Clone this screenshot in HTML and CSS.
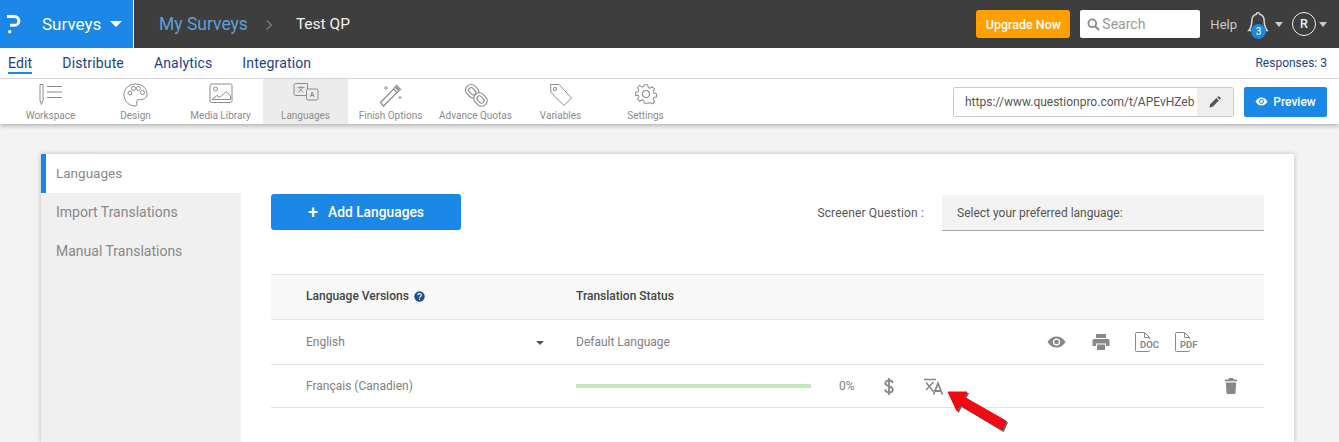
FILE: index.html
```html
<!DOCTYPE html>
<html lang="en">
<head>
<meta charset="UTF-8" />
<title>Test QP - Languages</title>
<link rel="stylesheet" href="styles.css">
</head>
<body>

<!-- Top bar -->
<div class="topbar">
  <div class="brand">
    <svg class="logo" width="14" height="19" viewBox="0 0 14 19"><path d="M0 1.500h7.500a4.200 4.200 0 0 1 0 8.800H3" fill="none" stroke="#fff" stroke-width="3"/><rect x="1" y="15" width="3.400" height="3.400" rx="1.700" fill="#fff"/></svg>
    <span class="brand-name">Surveys</span>
    <span class="caret caret-brand"></span>
  </div>
  <div class="crumbs">
    <span class="crumb-link">My Surveys</span>
    <svg class="crumb-sep" width="8" height="12" viewBox="0 0 8 12"><path d="M1.500 1.500L6.500 6l-5 4.500" fill="none" stroke="#808080" stroke-width="1.200"/></svg>
    <span class="crumb-current">Test QP</span>
  </div>
  <div class="top-right">
    <button class="upgrade">Upgrade Now</button>
    <div class="search">
      <svg width="13" height="13" viewBox="0 0 13 13"><circle cx="5.300" cy="5.300" r="3.900" fill="none" stroke="#8a8a8a" stroke-width="1.800"/><path d="M8.200 8.200l3.800 3.800" stroke="#8a8a8a" stroke-width="2"/></svg>
      <span>Search</span>
    </div>
    <span class="help">Help</span>
    <div class="bell">
      <svg width="22" height="27" viewBox="0 0 22 27"><path d="M11 1.500c1 0 1.600.6 1.600 1.700 3.300.8 4.600 3.500 4.600 6.800 0 4.500 1 7 3 9.500H1.800c2-2.500 3-5 3-9.500 0-3.300 1.300-6 4.600-6.800 0-1.100.6-1.700 1.600-1.700z" fill="none" stroke="#cfd3d8" stroke-width="1.600"/></svg>
      <span class="badge">3</span>
    </div>
    <span class="caret caret-small"></span>
    <span class="avatar">R</span>
    <span class="caret caret-small caret-last"></span>
  </div>
</div>

<!-- Tabs -->
<div class="tabs">
  <a class="tab active">Edit</a>
  <a class="tab">Distribute</a>
  <a class="tab">Analytics</a>
  <a class="tab">Integration</a>
  <span class="responses">Responses: 3</span>
</div>

<!-- Toolbar -->
<div class="toolbar">
  <div class="tool">
    <svg width="26" height="24" viewBox="0 0 26 24" fill="none" stroke="#8c8c8c"><path d="M2 1.500h3v16l-1.500 4-1.500-4z"/><path d="M9 3.500h15M9 9h15M9 14.500h15" stroke-width="1.200"/></svg>
    <span>Workspace</span>
  </div>
  <div class="tool">
    <svg width="25" height="24" viewBox="0 0 25 24" fill="none" stroke="#8c8c8c"><path d="M12.500 1C6 1 1 5.800 1 11.800 1 18 6 23 12 23c2.200 0 2.500-1.500 1.800-3-.8-1.800.3-3.500 2.400-3.400 3.800.2 7.800-1 7.800-5.400C24 5.300 19 1 12.500 1z"/><circle cx="7" cy="10" r="2"/><circle cx="10.500" cy="5.500" r="2"/><circle cx="15.500" cy="5.500" r="2"/><circle cx="19.500" cy="9.500" r="2"/></svg>
    <span>Design</span>
  </div>
  <div class="tool">
    <svg width="24" height="21" viewBox="0 0 24 21" fill="none" stroke="#8c8c8c"><rect x="1" y="1" width="22" height="18.500" rx="1.500"/><circle cx="6.500" cy="6" r="2"/><path d="M3 16.500l5-4 3 2 6-6 4.500 4v4z"/></svg>
    <span>Media Library</span>
  </div>
  <div class="tool tool-active">
    <svg width="26" height="18" viewBox="0 0 26 18" fill="none" stroke="#8c8c8c"><path d="M14 12.500H3a2 2 0 0 1-2-2V2a1.500 1.500 0 0 1 1.500-1.500h12V6"/><rect x="13.500" y="6" width="11.500" height="11" rx="1.500"/><path d="M4.500 4.500h7M8 3v1.500M5.500 9.500l4.500-5M6 5.500l4.500 4" stroke-width=".9"/><path d="M17.300 14l1.900-5 1.900 5M18 12.500h2.400" stroke-width="1"/></svg>
    <span>Languages</span>
  </div>
  <div class="tool">
    <svg width="24" height="24" viewBox="0 0 24 24" fill="none" stroke="#8c8c8c" stroke-width="1.200"><path d="M1.500 19.500L14.500 6l3.500 3.500L4.500 23z"/><path d="M14.500 6l3-3.500 4 4-3.500 3"/><path d="M17 4.500l2.500 2.500" stroke-width="1.800"/><path d="M7 3v4M5 5h4M21 13v3M19.500 14.500h3" stroke-width=".9"/></svg>
    <span>Finish Options</span>
  </div>
  <div class="tool">
    <svg width="24" height="24" viewBox="0 0 24 24" fill="none" stroke="#8c8c8c" stroke-width="1.100">
      <g transform="rotate(-45 7.500 7.500)"><rect x="2" y="1.500" width="11" height="14" rx="5"/><rect x="5" y="4.500" width="5" height="8" rx="2.500"/></g>
      <g transform="rotate(-45 16.500 16.500)"><rect x="11" y="9.500" width="11" height="14" rx="5" fill="#fff"/><rect x="14" y="12.500" width="5" height="8" rx="2.500"/></g>
    </svg>
    <span>Advance Quotas</span>
  </div>
  <div class="tool">
    <svg width="24" height="24" viewBox="0 0 24 24" fill="none" stroke="#8c8c8c"><path d="M1.500 1.500h8.500l12.500 13.500-7.500 7.500L2 9.500z" stroke-linejoin="round"/><circle cx="6" cy="6" r="1.600"/></svg>
    <span>Variables</span>
  </div>
  <div class="tool">
    <svg width="22" height="22" viewBox="0 0 24 24" fill="none" stroke="#8c8c8c" stroke-width="1.200" stroke-linejoin="round"><circle cx="12" cy="12" r="3.800"/><path d="M10 1h4l.7 3.200 2 .9 2.800-1.800 2.800 2.800-1.800 2.800.9 2 3.100.7v4l-3.100.7-.9 2 1.800 2.800-2.800 2.800-2.800-1.800-2 .9L14 23h-4l-.7-3.200-2-.9-2.800 1.800-2.800-2.800 1.800-2.800-.9-2L-.5 14v-4l3.100-.7.900-2-1.800-2.800 2.800-2.800 2.800 1.800 2-.9z" transform="translate(1.100 1.100) scale(.91)"/></svg>
    <span>Settings</span>
  </div>
  <div class="toolbar-right">
    <div class="url-box">
      <span class="url-text">https://www.questionpro.com/t/APEvHZeb</span>
      <span class="url-edit">
        <svg width="12" height="12" viewBox="0 0 12 12"><path d="M0.500 11.500l.7-3.200 6.200-6.200 2.500 2.500-6.200 6.200zM8.200 1.300l.8-.8a.9.900 0 0 1 1.200 0l1.300 1.300a.9.900 0 0 1 0 1.200l-.8.800z" fill="#555"/></svg>
      </span>
    </div>
    <button class="preview">
      <svg width="13" height="9" viewBox="0 0 13 9"><path d="M.500 4.500C2 2 4 .500 6.500.500S11 2 12.500 4.500C11 7 9 8.500 6.500 8.500S2 7 .500 4.500z" fill="#fff"/><circle cx="6.500" cy="4.500" r="2.400" fill="#1b87e6"/><circle cx="6.500" cy="4.500" r="1.400" fill="#fff"/></svg>
      Preview
    </button>
  </div>
</div>

<!-- Page -->
<div class="page">
  <div class="card">
    <div class="side">
      <div class="side-item selected">Languages</div>
      <div class="side-item">Import Translations</div>
      <div class="side-item">Manual Translations</div>
    </div>
    <div class="content">
      <div class="content-top">
        <button class="add-btn"><span class="plus">+</span>Add Languages</button>
        <div class="screener">
          <span class="screener-label">Screener Question :</span>
          <div class="screener-select">Select your preferred language:</div>
        </div>
      </div>

      <div class="lang-table">
        <div class="row row-head">
          <div class="col-name">Language Versions
            <svg class="help-dot" width="11" height="11" viewBox="0 0 11 11"><circle cx="5.500" cy="5.500" r="5.200" fill="#1d4f91"/><path d="M3.800 4.300c0-2.200 3.500-2.200 3.500-.1 0 1.300-1.700 1.200-1.700 2.500" fill="none" stroke="#fff" stroke-width="1.100"/><circle cx="5.600" cy="8.300" r=".7" fill="#fff"/></svg>
          </div>
          <div class="col-status">Translation Status</div>
        </div>
        <div class="row">
          <div class="col-name">English<span class="caret caret-row"></span></div>
          <div class="col-status">Default Language</div>
          <div class="row-icons">
            <svg class="ic-eye" width="19" height="12" viewBox="0 0 19 12"><path d="M.500 6C2.500 2.500 5.500.500 9.500.500S16.500 2.500 18.500 6c-2 3.500-5 5.500-9 5.500S2.500 9.500.500 6z" fill="#888"/><circle cx="9.500" cy="6" r="3.600" fill="#fff"/><circle cx="9.500" cy="6" r="2.300" fill="#888"/></svg>
            <svg class="ic-print" width="18" height="16" viewBox="0 0 17 16"><path d="M3.500 0h10v4h-10zM1.500 5h14A1.500 1.500 0 0 1 17 6.500V12h-3.500V9.500h-10V12H0V6.500A1.500 1.500 0 0 1 1.500 5zM4.500 10.500h8V16h-8z" fill="#888"/></svg>
            <div class="file-ic">
              <svg width="15" height="20" viewBox="0 0 15 20"><path d="M.500 1.500a1 1 0 0 1 1-1h8l5 5v13a1 1 0 0 1-1 1h-12a1 1 0 0 1-1-1z M9.500.500v5h5" fill="#fff" stroke="#8a8a8a"/></svg>
              <span>DOC</span>
            </div>
            <div class="file-ic">
              <svg width="15" height="20" viewBox="0 0 15 20"><path d="M.500 1.500a1 1 0 0 1 1-1h8l5 5v13a1 1 0 0 1-1 1h-12a1 1 0 0 1-1-1z M9.500.500v5h5" fill="#fff" stroke="#8a8a8a"/></svg>
              <span>PDF</span>
            </div>
          </div>
        </div>
        <div class="row row-last">
          <div class="col-name">Français (Canadien)</div>
          <div class="col-status col-progress">
            <div class="bar"></div>
            <span class="pct">0%</span>
            <svg class="ic-dollar" width="10" height="17" viewBox="0 0 10 17" fill="none" stroke="#888" stroke-width="1.800"><path d="M8.800 5C8.500 3 7 2.500 5 2.500 3 2.500 1.300 3.500 1.300 5.200c0 3.800 7.500 2 7.500 6.200 0 2-1.800 3-3.800 3-2.200 0-3.700-1-4-3M5 0v17"/></svg>
            <svg class="ic-translate" width="20" height="17" viewBox="0 0 20 17" fill="none" stroke="#888" stroke-width="1.500"><path d="M0 1.500h12M2 4.500l7.500 9M9.500 4l-7.500 8"/><path d="M9.500 16.500L14 5.500l4.500 11M11 13h6" stroke-width="1.800"/></svg>
          </div>
          <svg class="ic-trash" width="12" height="16" viewBox="0 0 12 16"><path d="M4 0h4l.7 1.500H12v1.800H0V1.500h3.300zM.8 4.500h10.400L10.500 15a1 1 0 0 1-1 1h-7a1 1 0 0 1-1-1z" fill="#888"/></svg>
        </div>
      </div>
    </div>
  </div>
</div>

<!-- Annotation arrow -->
<svg class="arrow" width="66" height="46" viewBox="0 0 66 46">
  <path d="M2 2L21 2 18 7 60 31 56 40 14 15 11 21Z" fill="#333" stroke="#333" stroke-linejoin="round" opacity=".75" transform="translate(1.500 1.500)"/>
  <path d="M2 2L21 2 18 7 60 31 56 40 14 15 11 21Z" fill="#f00a14" stroke="#f00a14" stroke-linejoin="round"/>
</svg>

</body>
</html>
```

FILE: styles.css
```css
/* Base */
html, body {
  height: 442px;
  overflow: hidden;
}
body {
  margin: 0;
  background: #f3f3f3;
  font-family: 'Roboto', 'Noto Sans', sans-serif;
  color: #777;
  position: relative;
}
button {
  font-family: inherit;
  border: none;
  cursor: pointer;
}
.caret {
  display: inline-block;
  width: 0;
  height: 0;
  border-left: 5px solid transparent;
  border-right: 5px solid transparent;
  border-top: 5px solid #ccc;
}

/* Top bar */
.topbar {
  display: flex;
  align-items: center;
  height: 48px;
  background: #3e3e3e;
}
.brand {
  display: flex;
  align-items: center;
  width: 133px;
  height: 48px;
  background: #1b87e6;
  border-right: 1px solid #fff;
  color: #fff;
}
.logo {
  margin-left: 7px;
}
.brand-name {
  margin-left: 21px;
  font-size: 17px;
}
.caret-brand {
  margin-left: 9px;
  border-left-width: 6px;
  border-right-width: 6px;
  border-top: 6px solid #fff;
}
.crumbs {
  display: flex;
  align-items: center;
  margin-left: 25px;
  font-size: 17.5px;
}
.crumb-link {
  color: #5f9fd6;
}
.crumb-sep {
  margin: 2px 23px 0 17px;
}
.crumb-current {
  color: #f2f2f2;
  font-size: 15.500px;
}
.top-right {
  display: flex;
  align-items: center;
  margin-left: auto;
  padding-right: 12px;
}
.upgrade {
  width: 94px;
  height: 28px;
  background: #ff9f00;
  color: #fff;
  font-size: 12.500px;
  font-weight: 500;
  border-radius: 3px;
  padding: 0;
}
.search {
  display: flex;
  align-items: center;
  gap: 2px;
  width: 120px;
  height: 28px;
  margin-left: 10px;
  padding-left: 7px;
  box-sizing: border-box;
  background: #fff;
  border-radius: 2px;
  color: #999;
  font-size: 14px;
}
.help {
  margin-left: 10px;
  color: #ccc;
  font-size: 13px;
}
.bell {
  position: relative;
  width: 22px;
  height: 27px;
  margin-left: 10px;
}
.badge {
  position: absolute;
  left: 4px;
  top: 13px;
  width: 15px;
  height: 15px;
  line-height: 15px;
  border-radius: 50%;
  background: #1b87e6;
  color: #fff;
  font-size: 10px;
  text-align: center;
}
.caret-small {
  margin-left: 6px;
  border-left-width: 4.500px;
  border-right-width: 4.500px;
}
.avatar {
  width: 22px;
  height: 22px;
  line-height: 22px;
  margin-left: 9px;
  border: 1px solid #eee;
  border-radius: 50%;
  text-align: center;
  color: #eee;
  font-size: 12.500px;
  font-weight: 500;
}
.caret-last {
  margin-left: 3px;
}

/* Tabs */
.tabs {
  display: flex;
  align-items: center;
  gap: 30px;
  height: 30px;
  padding: 0 12px 0 8px;
  background: #fff;
  border-bottom: 1px solid #ddd;
}
.tab {
  color: #1d3f87;
  font-size: 14px;
  line-height: 17px;
  letter-spacing: 0.15px;
}
.tab.active {
  border-bottom: 2px solid #1b87e6;
  margin-top: 2px;
}
.responses {
  margin-left: auto;
  color: #1d3f87;
  font-size: 12px;
}

/* Toolbar */
.toolbar {
  display: flex;
  height: 45px;
  padding-left: 8px;
  background: #fff;
  box-shadow: 0 2px 4px rgba(0, 0, 0, 0.25);
  position: relative;
}
.tool {
  display: flex;
  flex-direction: column;
  align-items: center;
  justify-content: space-between;
  width: 85px;
  height: 45px;
  padding: 4px 0 3px;
  box-sizing: border-box;
  font-size: 10px;
  color: #8c8c8c;
}
.tool-active {
  background: #ececec;
}
.toolbar-right {
  display: flex;
  align-items: center;
  gap: 10px;
  margin-left: auto;
  padding-right: 12px;
}
.url-box {
  display: flex;
  align-items: stretch;
  width: 281px;
  height: 30px;
  box-sizing: border-box;
  border: 1px solid #ccc;
  border-radius: 2px;
}
.url-text {
  flex: 1;
  padding-left: 11px;
  overflow: hidden;
  white-space: nowrap;
  font-size: 12px;
  line-height: 28px;
  color: #555;
}
.url-edit {
  display: flex;
  align-items: center;
  justify-content: center;
  width: 36px;
  background: #eee;
}
.preview {
  display: flex;
  align-items: center;
  justify-content: center;
  gap: 5px;
  width: 83px;
  height: 30px;
  padding: 0;
  background: #1b87e6;
  color: #fff;
  font-size: 12px;
  font-weight: 500;
  border-radius: 2px;
}

/* Page + card */
.page {
  padding: 30px 45px 0 41px;
}
.card {
  display: flex;
  height: 288px;
  background: #fff;
  box-shadow: 0 0 5px rgba(0, 0, 0, 0.22);
}
.side {
  width: 200px;
  flex-shrink: 0;
  background: #f0f0f0;
}
.side-item {
  height: 39px;
  line-height: 39px;
  padding-left: 15px;
  font-size: 14px;
  color: #888;
}
.side-item.selected {
  background: #fff;
  border-left: 5px solid #1b87e6;
  padding-left: 10px;
  font-size: 13.500px;
}
.content {
  flex: 1;
  padding: 40px 30px 0;
}

/* Add button + screener */
.content-top {
  display: flex;
  justify-content: space-between;
  height: 80px;
}
.add-btn {
  width: 190px;
  height: 36px;
  padding: 0;
  background: #1b87e6;
  color: #fff;
  font-size: 13.800px;
  font-weight: 500;
  border-radius: 3px;
}
.plus {
  font-size: 18px;
  line-height: 14px;
  margin-right: 10px;
  vertical-align: -1px;
}
.screener {
  display: flex;
  align-items: center;
  height: 36px;
  margin-top: 1px;
}
.screener-label {
  margin-right: 18px;
  color: #555;
  font-size: 12px;
  letter-spacing: 0.15px;
}
.screener-select {
  width: 322px;
  height: 36px;
  line-height: 36px;
  box-sizing: border-box;
  padding-left: 15px;
  background: #f3f3f3;
  border-bottom: 1px solid #aaa;
  color: #555;
  font-size: 12px;
}

/* Language table */
.lang-table {
  border-top: 1px solid #e4e4e4;
}
.row {
  display: flex;
  align-items: center;
  position: relative;
  height: 44px;
  border-bottom: 1px solid #e4e4e4;
  font-size: 12px;
  color: #808080;
}
.row-head {
  box-sizing: border-box;
  height: 45px;
  padding-bottom: 2px;
  background: #f8f8f8;
  color: #444;
  font-weight: 500;
}
.row-last {
  height: 42px;
}
.col-name {
  display: flex;
  align-items: center;
  position: relative;
  width: 270px;
  margin-left: 35px;
  box-sizing: border-box;
}
.help-dot {
  margin-left: 5px;
}
.caret-row {
  position: absolute;
  right: 32px;
  top: 6px;
  border-left-width: 4px;
  border-right-width: 4px;
  border-top: 4px solid #555;
}
.col-progress {
  display: flex;
  align-items: center;
}
.bar {
  width: 235px;
  height: 4px;
  background: #c4e6bd;
}
.pct {
  margin-left: 28px;
}
.ic-dollar {
  margin-left: 29px;
}
.ic-translate {
  margin-left: 30px;
}
.row-icons {
  display: flex;
  align-items: center;
  margin-left: auto;
  margin-right: 74px;
}
.ic-print {
  margin-left: 26px;
}
.file-ic {
  position: relative;
  width: 15px;
  height: 20px;
  margin-left: 25px;
}
.file-ic span {
  position: absolute;
  left: 4px;
  top: 7px;
  padding: 0 1px;
  background: #fff;
  font-size: 9.500px;
  line-height: 11px;
  font-weight: 700;
  color: #8a8a8a;
}
.ic-trash {
  margin-left: auto;
  margin-right: 27px;
}

/* Red arrow laid over the screenshot */
.arrow {
  position: absolute;
  left: 946px;
  top: 390px;
}
```
